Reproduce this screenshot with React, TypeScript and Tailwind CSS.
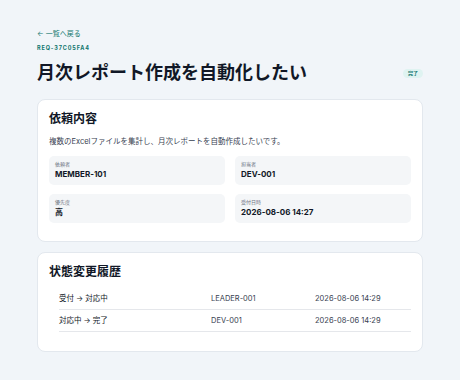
import React from "react";

const font = { fontFamily: "Inter, 'Noto Sans CJK JP', sans-serif" };

function Field({ label, value }: { label: string; value: string }) {
  return (
    <div className="bg-[#f4f6f8] rounded-[5px] h-[29px] px-[6px] flex flex-col justify-center">
      <div className="text-[5px] leading-[7px] text-[#6b7280]">{label}</div>
      <div className="text-[8px] leading-[11px] font-bold text-[#111827] mt-[1px]">{value}</div>
    </div>
  );
}

export default function App() {
  const rows = [
    ["受付 → 対応中", "LEADER-001", "2026-08-06 14:29"],
    ["対応中 → 完了", "DEV-001", "2026-08-06 14:29"],
  ];
  return (
    <div className="min-h-screen w-[460px] h-[380px] bg-[#f1f5f9] px-[37px] pt-[29px]" style={font}>
      <div className="text-[7px] leading-[10px] text-[#0f766e]">← 一覧へ戻る</div>
      <div className="mt-[5px] text-[5.5px] leading-[8px] font-bold tracking-[0.16em] text-[#0f766e]">REQ-37C05FA4</div>
      <div className="flex items-center justify-between mt-[9px] h-[24px]">
        <h1 className="text-[18px] leading-[24px] font-bold text-[#111827]">月次レポート作成を自動化したい</h1>
        <span className="rounded-full bg-[#dff3f1] text-[#0f766e] text-[5px] leading-[9px] px-[5px] font-bold">完了</span>
      </div>

      <div className="mt-[14px] bg-white rounded-[8px] border border-[#e3e8ee] h-[143px] px-[11px] pt-[11px]">
        <h2 className="text-[12px] leading-[16px] font-bold text-[#111827]">依頼内容</h2>
        <p className="mt-[10px] text-[7.5px] leading-[10px] text-[#374151]">複数のExcelファイルを集計し、月次レポートを自動作成したいです。</p>
        <div className="mt-[9px] grid grid-cols-2 gap-x-[10px] gap-y-[9px]">
          <Field label="依頼者" value="MEMBER-101" />
          <Field label="担当者" value="DEV-001" />
          <Field label="優先度" value="高" />
          <Field label="受付日時" value="2026-08-06 14:27" />
        </div>
      </div>

      <div className="mt-[10px] bg-white rounded-[8px] border border-[#e3e8ee] h-[100px] px-[11px] pt-[11px]">
        <h2 className="text-[12px] leading-[16px] font-bold text-[#111827]">状態変更履歴</h2>
        <div className="ml-[10px] mt-[8px]">
          {rows.map((r, i) => (
            <div key={i} className="flex items-center h-[22px] border-b border-[#e5e7eb] text-[7.5px] text-[#374151]">
              <div className="w-[152px] text-[#111827]">{r[0]}</div>
              <div className="w-[104px]">{r[1]}</div>
              <div>{r[2]}</div>
            </div>
          ))}
        </div>
      </div>
    </div>
  );
}
